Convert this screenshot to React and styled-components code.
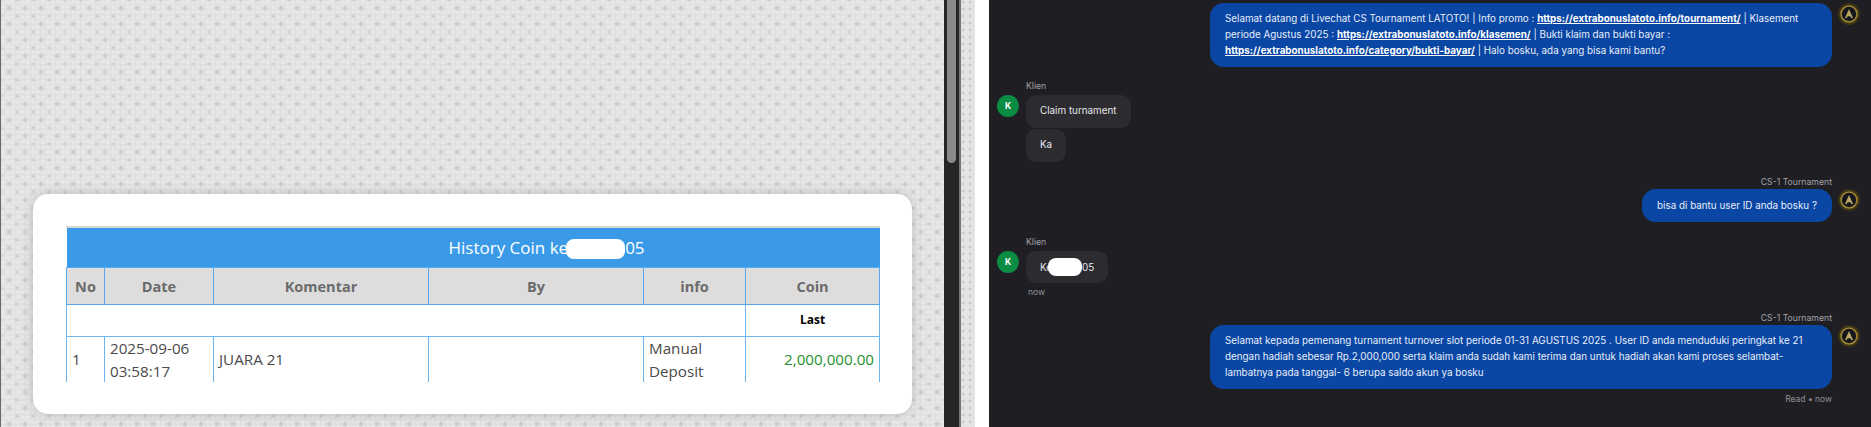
import React from 'react';
import styled, { createGlobalStyle } from 'styled-components';

const GlobalStyle = createGlobalStyle`
  html, body {
    margin: 0;
    padding: 0;
    width: 1871px;
    height: 427px;
    overflow: hidden;
    background: #fff;
  }
`;

const Page = styled.div`
  display: flex;
  width: 1871px;
  height: 427px;
`;

const texture = `
  radial-gradient(circle at 8px 8px, #c4c4c4 0, rgba(196, 196, 196, 0) 3.5px) 0 0 / 16px 16px,
  radial-gradient(circle at 8px 8px, #cbcbcb 0, rgba(203, 203, 203, 0) 3px) 8px 8px / 16px 16px,
  radial-gradient(circle at 2px 2px, #ededed 0, rgba(237, 237, 237, 0) 2.5px) 0 0 / 5px 5px,
  #e1e1e1
`;

const LeftPane = styled.div`
  width: 944px;
  height: 427px;
  flex: none;
  box-sizing: border-box;
  padding: 194px 0 0 32px;
  background: ${texture};
  border-left: 1px solid #6b6b6b;
`;

const Card = styled.div`
  width: 879px;
  height: 220px;
  box-sizing: border-box;
  padding: 32px 32px 32px 33px;
  background: #fff;
  border-radius: 15px;
  box-shadow: 0 0 12px rgba(0, 0, 0, 0.18);
`;

const TableClip = styled.div`
  width: 814px;
  height: 156px;
  overflow: hidden;
  border-top: 2px solid #d9d9d4;
  box-sizing: border-box;
`;

const CoinTable = styled.table`
  width: 813px;
  table-layout: fixed;
  border-collapse: collapse;
  font-family: "Open Sans", "Noto Sans", sans-serif;
  color: #4a4a4a;
`;

const TitleCell = styled.th`
  height: 39px;
  padding: 0 0 0 147px;
  background: #3a9ae8;
  color: #fff;
  font-size: 17px;
  font-weight: 400;
`;

const Pill = styled.span`
  display: inline-block;
  vertical-align: middle;
  flex: none;
  width: ${(p) => p.$w}px;
  height: ${(p) => p.$h}px;
  margin-left: ${(p) => p.$left || 0}px;
  background: #fff;
  border-radius: 8px;
`;

const HeadCell = styled.th`
  height: 36px;
  padding: 0;
  background: #ddd;
  border: 1px solid #5aa9ec;
  color: #6b6b6b;
  font-size: 14.5px;
  font-weight: 700;
`;

const Cell = styled.td`
  padding: 0 5px;
  border: 1px solid #6db6f2;
  font-size: 15.2px;
  line-height: 22.5px;
  height: ${(p) => p.$h || 45}px;
  text-align: ${(p) => p.$align || 'left'};
  color: ${(p) => p.$color || '#4a4a4a'};
  font-weight: ${(p) => (p.$bold ? 700 : 400)};
`;

const LastCell = styled(Cell)`
  font-size: 12px;
  color: #000;
  padding: 0;
`;

const Track = styled.div`
  width: 15px;
  height: 427px;
  flex: none;
  box-sizing: border-box;
  padding: 0 3px;
  background: #262626;
`;

const Thumb = styled.div`
  width: 9px;
  height: 163px;
  background: #8a8a8a;
  border-radius: 0 0 5px 5px;
`;

const Sliver = styled.div`
  width: 16px;
  height: 427px;
  flex: none;
  box-sizing: border-box;
  background:
    radial-gradient(circle at 2px 2px, #bdbdbd 0, rgba(189, 189, 189, 0) 2px) 0 0 / 7px 7px,
    #e4e4e4;
  border-left: 2px solid #777;
`;

const Gutter = styled.div`
  width: 14px;
  height: 427px;
  flex: none;
  background: #fff;
`;

const Chat = styled.div`
  width: 882px;
  height: 427px;
  flex: none;
  box-sizing: border-box;
  padding: 3px 0 0 0;
  background: #1f1f23;
  font-family: Inter, Roboto, sans-serif;
  font-size: 9.85px;
  color: #e6e6ea;
`;

const AgentRow = styled.div`
  display: flex;
  justify-content: flex-end;
  gap: 6px;
  margin-top: ${(p) => p.$top || 0}px;
  padding-right: 11px;
`;

const AgentColumn = styled.div`
  display: flex;
  flex-direction: column;
  align-items: flex-end;
`;

const SenderName = styled.div`
  font-size: 8.7px;
  line-height: 13px;
  color: #a2a2a8;
`;

const ClientName = styled(SenderName)`
  margin-bottom: 1px;
`;

const AgentBubble = styled.div`
  box-sizing: border-box;
  width: 622px;
  padding: 7px 15px 9px;
  background: #0a47a4;
  color: #e8eefa;
  border-radius: 14px;
  line-height: 16px;
`;

const ShortBubble = styled(AgentBubble)`
  width: auto;
  height: 33px;
  white-space: nowrap;
  display: flex;
  align-items: center;
`;

const BubbleLink = styled.a`
  color: #fff;
  font-weight: 700;
  text-decoration: underline;
`;

const AvatarWrap = styled.div`
  width: 22px;
  height: 22px;
  flex: none;
  align-self: flex-start;
  margin-top: ${(p) => p.$top || 0}px;
`;

const ClientRow = styled.div`
  display: flex;
  gap: 7px;
  margin-top: ${(p) => p.$top || 0}px;
  padding-left: 8px;
`;

const ClientAvatar = styled.div`
  width: 22px;
  height: 22px;
  flex: none;
  margin-top: 15px;
  border-radius: 50%;
  background: #0b8c43;
  color: #fff;
  font-size: 8.5px;
  font-weight: 700;
  display: flex;
  align-items: center;
  justify-content: center;
`;

const ClientColumn = styled.div`
  display: flex;
  flex-direction: column;
  align-items: flex-start;
  gap: 1px;
`;

const ClientBubble = styled.div`
  height: ${(p) => p.$h || 33}px;
  box-sizing: border-box;
  padding: 0 14px 3px;
  display: flex;
  align-items: center;
  background: #2b2b30;
  border-radius: 10px;
  line-height: 16px;
`;

const MaskedBubble = styled(ClientBubble)`
  padding-bottom: 1px;
`;

const Stamp = styled.div`
  font-size: 8.5px;
  line-height: 13px;
  color: #8f8f96;
  margin: ${(p) => p.$m || 0};
`;

function GoldAvatar() {
  return (
    <svg width="22" height="22" viewBox="0 0 22 22">
      <circle cx="11" cy="11" r="11" fill="#3d3414" />
      <circle cx="11" cy="11" r="8" fill="#16171c" stroke="#9c8638" strokeWidth="1.6" />
      <path d="M11 6 L15 15 H13.1 L12.4 13.2 H9.6 L8.9 15 H7 Z" fill="#b8a565" />
    </svg>
  );
}

const columns = [
  ['No', 38],
  ['Date', 109],
  ['Komentar', 215],
  ['By', 215],
  ['info', 102],
  ['Coin', 134],
];

export default function App() {
  return (
    <Page>
      <GlobalStyle />
      <LeftPane>
        <Card>
          <TableClip>
            <CoinTable>
              <colgroup>
                {columns.map(([name, w]) => (
                  <col key={name} width={w} />
                ))}
              </colgroup>
              <thead>
                <tr>
                  <TitleCell colSpan={6}>
                    History Coin ke<Pill $w={59} $h={20} $left={-2} />05
                  </TitleCell>
                </tr>
                <tr>
                  {columns.map(([name]) => (
                    <HeadCell key={name}>{name}</HeadCell>
                  ))}
                </tr>
              </thead>
              <tbody>
                <tr>
                  <Cell colSpan={5} $h={31} />
                  <LastCell $h={31} $align="center" $bold>Last</LastCell>
                </tr>
                <tr>
                  <Cell>1</Cell>
                  <Cell>2025-09-06 03:58:17</Cell>
                  <Cell>JUARA 21</Cell>
                  <Cell />
                  <Cell>Manual Deposit</Cell>
                  <Cell $align="right" $color="#1f8f2e">2,000,000.00</Cell>
                </tr>
              </tbody>
            </CoinTable>
          </TableClip>
        </Card>
      </LeftPane>
      <Track>
        <Thumb />
      </Track>
      <Sliver />
      <Gutter />
      <Chat>
        <AgentRow>
          <AgentBubble>
            Selamat datang di Livechat CS Tournament LATOTO! | Info promo :{' '}
            <BubbleLink>https://extrabonuslatoto.info/tournament/</BubbleLink> | Klasement periode Agustus 2025 :{' '}
            <BubbleLink>https://extrabonuslatoto.info/klasemen/</BubbleLink> | Bukti klaim dan bukti bayar :{' '}
            <BubbleLink>https://extrabonuslatoto.info/category/bukti-bayar/</BubbleLink> | Halo bosku, ada yang bisa kami bantu?
          </AgentBubble>
          <AvatarWrap><GoldAvatar /></AvatarWrap>
        </AgentRow>

        <ClientRow $top={13}>
          <ClientAvatar>K</ClientAvatar>
          <ClientColumn>
            <ClientName>Klien</ClientName>
            <ClientBubble>Claim turnament</ClientBubble>
            <ClientBubble>Ka</ClientBubble>
          </ClientColumn>
        </ClientRow>

        <AgentRow $top={14}>
          <AgentColumn>
            <SenderName>CS-1 Tournament</SenderName>
            <ShortBubble>bisa di bantu user ID anda bosku ?</ShortBubble>
          </AgentColumn>
          <AvatarWrap $top={13}><GoldAvatar /></AvatarWrap>
        </AgentRow>

        <ClientRow $top={14}>
          <ClientAvatar>K</ClientAvatar>
          <ClientColumn>
            <ClientName>Klien</ClientName>
            <MaskedBubble $h={32}>
              Ke<Pill $w={34} $h={18} $left={-4} />05
            </MaskedBubble>
            <Stamp $m="2px 0 0 2px">now</Stamp>
          </ClientColumn>
        </ClientRow>

        <AgentRow $top={13}>
          <AgentColumn>
            <SenderName>CS-1 Tournament</SenderName>
            <AgentBubble>
              Selamat kepada pemenang turnament turnover slot periode 01-31 AGUSTUS 2025 . User ID anda menduduki peringkat ke 21 dengan hadiah sebesar Rp.2,000,000 serta klaim anda sudah kami terima dan untuk hadiah akan kami proses selambat-lambatnya pada tanggal- 6 berupa saldo akun ya bosku
            </AgentBubble>
            <Stamp $m="4px 0 0 0">Read • now</Stamp>
          </AgentColumn>
          <AvatarWrap $top={13}><GoldAvatar /></AvatarWrap>
        </AgentRow>
      </Chat>
    </Page>
  );
}
